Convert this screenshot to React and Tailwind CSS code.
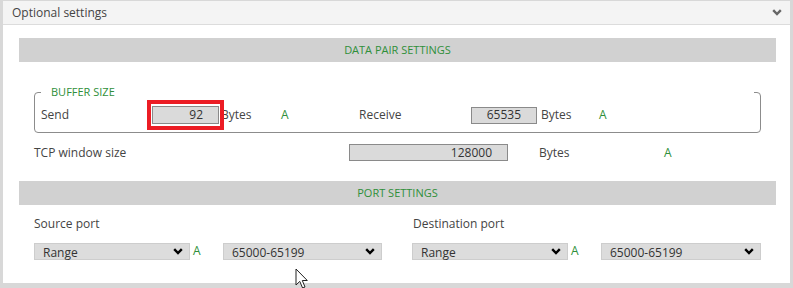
import React from "react";

const green = "text-[#2f8f3a]";

function Chevron({ className = "" }) {
  return (
    <svg width="10" height="7" viewBox="0 0 10 7" className={className}>
      <polyline points="1.2,1.2 5,5 8.8,1.2" fill="none" stroke="currentColor" strokeWidth="2.4" strokeLinecap="butt" strokeLinejoin="miter" />
    </svg>
  );
}

function FakeSelect({ value, w }) {
  return (
    <div className={`${w} h-[17px] bg-[#dcdcdc] border border-[#cdcdcd] flex items-center justify-between pl-[8px] pr-[6px] text-[12px] leading-[14px] text-[#333]`}>
      <span className="pt-[3px]">{value}</span>
      <Chevron className="text-black" />
    </div>
  );
}

function Input({ value, w, h = "h-[18px]" }) {
  return (
    <div className={`${w} ${h} bg-[#dadada] border border-[#8a8a8a] flex items-center justify-end pr-[15px] text-[12px] text-[#333]`}>
      {value}
    </div>
  );
}

export default function App() {
  return (
    <div
      className="relative w-[793px] h-[288px] bg-[#d8d8d8] pl-[3px] pr-[3px] pt-[1px] pb-[5px] overflow-hidden"
      style={{ fontFamily: '"Open Sans", "Liberation Sans", sans-serif' }}
    >
      <div className="h-full bg-white flex flex-col">
        {/* Header */}
        <div className="h-[24px] shrink-0 bg-[#f4f4f4] border-b border-[#dcdcdc] flex items-center justify-between pl-[9px] pr-[8px]">
          <span className="text-[12px] text-[#444]">Optional settings</span>
          <Chevron className="text-[#666]" />
        </div>

        {/* Data pair settings bar */}
        <div className={`ml-[16px] mr-[14px] mt-[13px] h-[24px] bg-[#d1d1d1] flex items-center justify-center text-[11px] ${green}`}>
          DATA PAIR SETTINGS
        </div>

        {/* Buffer size fieldset */}
        <fieldset className="ml-[31px] mr-[29px] mt-[23px] border border-[#8c8c8c] rounded-[4px] px-[6px]">
          <legend className={`w-full bg-white pl-[10px] text-[11px] leading-[14px] ${green}`}>BUFFER SIZE</legend>
          <div className="flex items-center h-[18px] mt-[7px] mb-[8px] text-[12px] text-[#444]">
            <div className="w-[111px]">Send</div>
            <div className="relative">
              <Input value="92" w="w-[67px]" />
              <span className="absolute -left-[5px] -right-[5px] -top-[6px] -bottom-[6px] border-[4px] border-[#ec1c24]" />
            </div>
            <div className="w-[62px] pl-[2px]">Bytes</div>
            <div className={`w-[78px] ${green}`}>A</div>
            <div className="w-[112px]">Receive</div>
            <Input value="65535" w="w-[66px]" h="h-[17px]" />
            <div className="w-[62px] pl-[4px]">Bytes</div>
            <div className={green}>A</div>
          </div>
        </fieldset>

        {/* TCP window size */}
        <div className="ml-[31px] mt-[11px] h-[17px] flex items-center text-[12px] text-[#444]">
          <div className="w-[315px]">TCP window size</div>
          <Input value="128000" w="w-[159px]" h="h-[17px]" />
          <div className="w-[156px] pl-[31px]">Bytes</div>
          <div className={green}>A</div>
        </div>

        {/* Port settings bar */}
        <div className={`ml-[16px] mr-[14px] mt-[20px] h-[24px] bg-[#d1d1d1] flex items-center justify-center text-[11px] ${green}`}>
          PORT SETTINGS
        </div>

        {/* Ports */}
        <div className="ml-[31px] mt-[11px] flex text-[12px] text-[#444]">
          <div className="w-[378px]">
            <div className="h-[16px] leading-[16px]">Source port</div>
            <div className="mt-[10px] flex items-center">
              <FakeSelect value="Range" w="w-[156px]" />
              <div className={`w-[33px] pl-[3px] ${green}`}>A</div>
              <FakeSelect value="65000-65199" w="w-[159px]" />
            </div>
          </div>
          <div>
            <div className="h-[16px] leading-[16px] pl-[1px]">Destination port</div>
            <div className="mt-[10px] flex items-center">
              <FakeSelect value="Range" w="w-[156px]" />
              <div className={`w-[33px] pl-[3px] ${green}`}>A</div>
              <FakeSelect value="65000-65199" w="w-[160px]" />
            </div>
          </div>
        </div>
      </div>

      {/* mouse cursor */}
      <svg className="absolute left-[295px] top-[268px]" width="14" height="22" viewBox="0 0 14 22">
        <path d="M1 1 L1 17 L4.8 13.4 L7.6 20 L10 19 L7.3 12.5 L12.3 12.5 Z" fill="white" stroke="#222" strokeWidth="1" strokeLinejoin="miter" />
      </svg>
    </div>
  );
}
